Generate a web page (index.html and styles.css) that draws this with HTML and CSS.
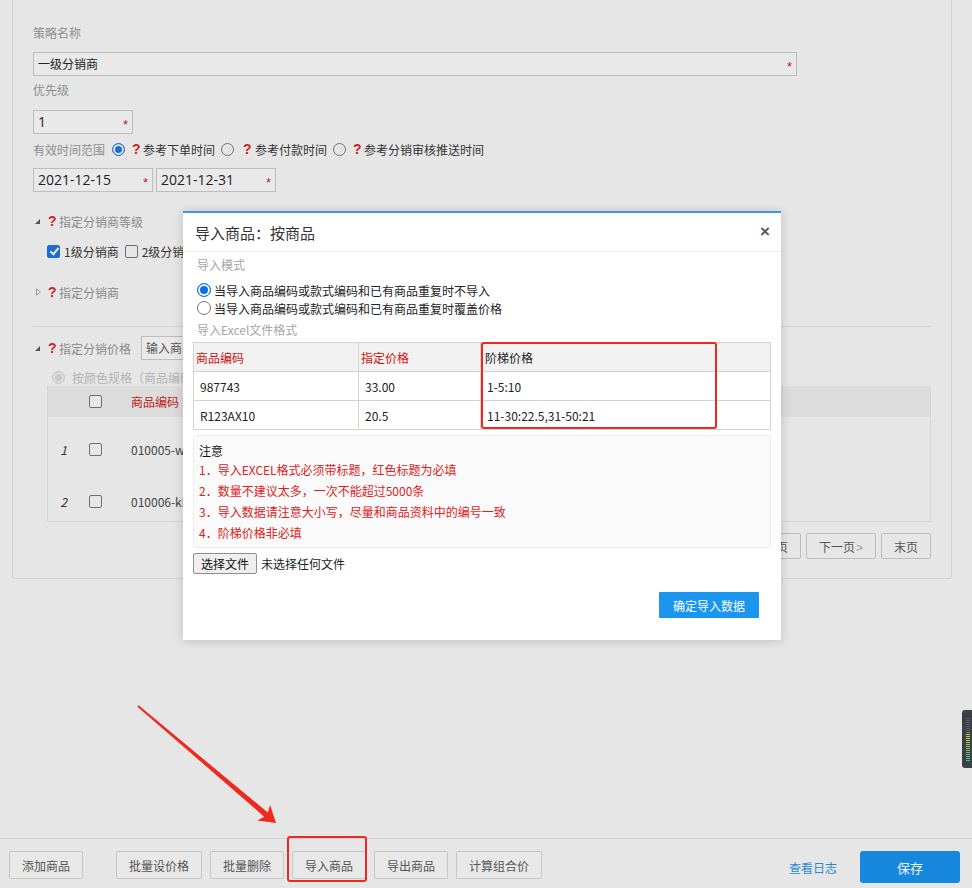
FILE: index.html
```html
<!DOCTYPE html>
<html lang="zh-CN">
<head>
<meta charset="utf-8">
<title>分销价格策略 - 导入商品</title>
<link rel="stylesheet" href="styles.css">
</head>
<body>
<main class="page">
  <section class="panel">
    <div class="field-label first">策略名称</div>
    <div class="input input-name"><span class="input-val">一级分销商</span><span class="req">*</span></div>
    <div class="field-label">优先级</div>
    <div class="input input-priority"><span class="input-val num">1</span><span class="req">*</span></div>
    <div class="time-row">
      <span class="inline-label">有效时间范围</span>
      <span class="radio checked"></span><span class="qmark">?</span><span class="opt">参考下单时间</span>
      <span class="radio"></span><span class="qmark wide">?</span><span class="opt">参考付款时间</span>
      <span class="radio"></span><span class="qmark">?</span><span class="opt">参考分销审核推送时间</span>
    </div>
    <div class="date-row">
      <div class="input input-date"><span class="input-val num">2021-12-15</span><span class="req">*</span></div>
      <div class="input input-date"><span class="input-val num">2021-12-31</span><span class="req">*</span></div>
    </div>
    <div class="sec">
      <span class="tri-open"></span><span class="qmark">?</span><span class="sec-title">指定分销商等级</span>
    </div>
    <div class="check-row">
      <span class="cbox checked"></span><span class="cb-text">1级分销商</span>
      <span class="cbox"></span><span class="cb-text">2级分销商</span>
      <span class="cbox"></span><span class="cb-text">3级分销商</span>
    </div>
    <div class="sec sec-closed">
      <svg class="tri-closed" width="5" height="8" viewBox="0 0 5 8"><path d="M0.5 0.8 L4.4 4 L0.5 7.2 Z" fill="none" stroke="#9a9a9a" stroke-width="1"/></svg><span class="qmark">?</span><span class="sec-title">指定分销商</span>
    </div>
    <div class="divider"></div>
    <div class="sec sec-price">
      <span class="tri-open"></span><span class="qmark">?</span><span class="sec-title">指定分销价格</span>
      <div class="input input-search"><span class="input-val muted">输入商品编码</span></div>
    </div>
    <div class="mode-row"><span class="radio disabled"></span><span class="mode-text">按颜色规格（商品编码）</span></div>
    <div class="grid">
      <div class="grid-head">
        <span class="c-idx"></span><span class="c-chk"><span class="cbox"></span></span><span class="c-code head-red">商品编码</span>
      </div>
      <div class="grid-row">
        <span class="c-idx">1</span><span class="c-chk"><span class="cbox"></span></span><span class="c-code">010005-white</span>
      </div>
      <div class="grid-row">
        <span class="c-idx">2</span><span class="c-chk"><span class="cbox"></span></span><span class="c-code">010006-khaki</span>
      </div>
    </div>
    <div class="pager">
      <button class="pbtn">首页</button>
      <button class="pbtn">&lt;上一页</button>
      <button class="pbtn">下一页<span class="gt">&gt;</span></button>
      <button class="pbtn">末页</button>
    </div>
  </section>
</main>

<footer class="footbar">
  <div class="foot-left">
    <button class="fbtn first">添加商品</button>
    <button class="fbtn">批量设价格</button>
    <button class="fbtn">批量删除</button>
    <button class="fbtn">导入商品</button>
    <button class="fbtn">导出商品</button>
    <button class="fbtn">计算组合价</button>
  </div>
  <div class="foot-right">
    <a class="log-link">查看日志</a>
    <button class="save">保存</button>
  </div>
</footer>

<div class="dialog">
  <div class="dlg-head">
    <span class="dlg-title">导入商品：按商品</span>
    <span class="dlg-close">×</span>
  </div>
  <div class="dlg-body">
    <div class="dlg-sub first">导入模式</div>
    <div class="dlg-radio first"><span class="radio checked bright"></span><span>当导入商品编码或款式编码和已有商品重复时不导入</span></div>
    <div class="dlg-radio"><span class="radio bright"></span><span>当导入商品编码或款式编码和已有商品重复时覆盖价格</span></div>
    <div class="dlg-sub second">导入Excel文件格式</div>
    <div class="xtable">
      <div class="xrow head">
        <div class="xcell x1 red">商品编码</div>
        <div class="xcell x2 red">指定价格</div>
        <div class="xcell x3">阶梯价格</div>
      </div>
      <div class="xrow">
        <div class="xcell x1">987743</div>
        <div class="xcell x2">33.00</div>
        <div class="xcell x3">1-5:10</div>
      </div>
      <div class="xrow">
        <div class="xcell x1">R123AX10</div>
        <div class="xcell x2">20.5</div>
        <div class="xcell x3">11-30:22.5,31-50:21</div>
      </div>
    </div>
    <div class="notes">
      <div class="notes-title">注意</div>
      <div class="notes-line">1．导入EXCEL格式必须带标题，红色标题为必填</div>
      <div class="notes-line">2．数量不建议太多，一次不能超过5000条</div>
      <div class="notes-line">3．导入数据请注意大小写，尽量和商品资料中的编号一致</div>
      <div class="notes-line">4．阶梯价格非必填</div>
    </div>
    <div class="file-row">
      <button class="file-btn">选择文件</button><span class="file-text">未选择任何文件</span>
    </div>
    <div class="dlg-foot">
      <button class="confirm">确定导入数据</button>
    </div>
  </div>
</div>

<div class="mark mark-ladder"></div>
<div class="mark mark-import"></div>

<svg class="arrow" width="300" height="840" viewBox="0 0 300 840">
  <polygon points="138.6,705.3 267.8,812.5 270.1,805.0 276,823 257.3,820.4 264.2,816.7 137.4,706.7" fill="#ee2a1f"/>
</svg>

<div class="float-widget">
  <svg width="10" height="58" viewBox="0 0 10 58">
    <defs>
      <linearGradient id="meter" x1="0" y1="0" x2="0" y2="1">
        <stop offset="0" stop-color="#5a5f64"/>
        <stop offset="0.34" stop-color="#5a5f64"/>
        <stop offset="0.36" stop-color="#d8d448"/>
        <stop offset="0.62" stop-color="#9ccc52"/>
        <stop offset="1" stop-color="#3fbfa6"/>
      </linearGradient>
      <pattern id="stripes" width="10" height="2" patternUnits="userSpaceOnUse">
        <rect width="10" height="1" fill="#fff"/>
      </pattern>
      <mask id="stripe-mask"><rect x="0" y="0" width="10" height="58" fill="url(#stripes)"/></mask>
    </defs>
    <rect x="0" y="0" width="14" height="58" rx="3" fill="#3b4046"/>
    <rect x="4" y="7" width="4" height="45" fill="url(#meter)" mask="url(#stripe-mask)"/>
  </svg>
</div>
</body>
</html>
```

FILE: styles.css
```css
* { box-sizing: border-box; }

html, body { margin: 0; }

body {
  font-family: "Noto Sans CJK SC", "Microsoft YaHei", sans-serif;
  font-size: 12px;
  color: #333;
  background: #e6e6e6;
  height: 888px;
  overflow: hidden;
  display: flex;
  flex-direction: column;
  position: relative;
}

button { font: inherit; cursor: default; }

/* ---------- page panel ---------- */
.page {
  flex: 1;
  padding-left: 12px;
}

.panel {
  width: 940px;
  border: 1px solid #d3d3d3;
  border-top: 0;
  border-radius: 0 0 3px 3px;
  padding: 0 20px 19px;
}

.field-label {
  line-height: 20px;
  color: #8e8e8e;
  margin-top: 4px;
}
.field-label.first { margin-top: 0; padding-top: 23px; }

.input {
  display: flex;
  align-items: center;
  justify-content: space-between;
  height: 24px;
  border: 1px solid #bdbdbd;
  background: #e9e9e9;
  padding: 0 4px 0 4px;
}
.input-val { color: #222; line-height: 20px; }
.input-val.num { font-family: "Open Sans", "Noto Sans", sans-serif; font-size: 14px; }
.input-val.muted { color: #555; }
.req {
  color: #c4133b;
  font-family: "Liberation Sans", sans-serif;
  font-size: 13px;
  line-height: 1;
  padding-top: 4px;
}

.input-name { margin-top: 9px; width: 764px; }
.input-priority { margin-top: 10px; width: 100px; }

.time-row {
  display: flex;
  align-items: center;
  height: 20px;
  margin-top: 5px;
}
.inline-label { color: #8e8e8e; margin-right: 7px; }
.opt { color: #333; margin-right: 6px; }

.radio {
  display: inline-block;
  width: 13px;
  height: 13px;
  border-radius: 50%;
  border: 1px solid #6f6f6f;
  background: #e6e6e6;
  margin-right: 7px;
  flex: none;
}
.radio.checked {
  border-color: #1b6dd2;
  background: #1b6dd2;
  box-shadow: inset 0 0 0 2px #e6e6e6;
}
.radio.bright { background: #fff; border-color: #767676; }
.radio.checked.bright {
  border-color: #0f6fe0;
  background: #0f6fe0;
  box-shadow: inset 0 0 0 2px #fff;
}
.radio.disabled {
  border-color: #c6c6c6;
  background: #c9c9c9;
  box-shadow: inset 0 0 0 2px #dedede;
}

.qmark {
  display: inline-block;
  width: 7px;
  color: #d11d1d;
  font-family: "Liberation Sans", sans-serif;
  font-weight: bold;
  font-size: 14px;
  line-height: 16px;
  margin-right: 4px;
}
.qmark.wide { margin-left: 2px; margin-right: 5px; }

.date-row {
  display: flex;
  gap: 3px;
  margin-top: 9px;
}
.input-date { width: 120px; }

.sec {
  display: flex;
  align-items: center;
  height: 20px;
  margin-top: 19px;
}
.sec-title { color: #8a8a8a; }
.tri-open {
  display: inline-block;
  width: 0;
  height: 0;
  border-style: solid;
  border-width: 0 0 5px 5px;
  border-color: transparent transparent #555 transparent;
  margin: 0 8px 0 2px;
}
.tri-closed { display: block; margin: 0 7px 0 3px; }
.sec-closed { margin-top: 21px; }

.check-row {
  display: flex;
  align-items: center;
  height: 20px;
  margin-top: 10px;
  padding-left: 14px;
}
.cbox {
  display: inline-block;
  position: relative;
  width: 13px;
  height: 13px;
  border: 1px solid #6f6f6f;
  border-radius: 2px;
  background: #e6e6e6;
  flex: none;
}
.cbox.checked { background: #1b6dd2; border-color: #1b6dd2; }
.cbox.checked::after {
  content: "";
  position: absolute;
  left: 3.5px;
  top: 0.5px;
  width: 3px;
  height: 7px;
  border: solid #e6e6e6;
  border-width: 0 2px 2px 0;
  transform: rotate(40deg);
}
.cb-text { margin: 0 6px 0 4px; color: #333; }

.divider {
  margin-top: 24px;
  border-top: 1px solid #d4d4d4;
}

.sec-price { margin-top: 9px; height: 24px; }
.input-search { margin-left: 10px; width: 220px; }

.mode-row {
  display: flex;
  align-items: center;
  height: 18px;
  margin-top: 8px;
  padding-left: 19px;
}
.mode-text { color: #b3b3b3; }

.grid {
  margin-left: 14px;
  border: 1px solid #d6d6d6;
  border-top: 0;
}
.grid-head {
  display: flex;
  align-items: center;
  height: 31px;
  background: #dcdcdc;
}
.grid-row {
  display: flex;
  align-items: center;
  height: 52px;
  padding-top: 12px;
}
.c-idx { width: 31px; text-align: center; font-style: italic; color: #333; }
.c-chk { width: 32px; display: flex; justify-content: center; }
.c-code { padding-left: 20px; color: #444; }
.head-red { color: #c21a1a; }

.pager {
  display: flex;
  justify-content: flex-end;
  gap: 5px;
  margin-top: 11px;
}
.pbtn {
  height: 26px;
  padding: 0 12px;
  border: 1px solid #bdbdbd;
  border-radius: 2px;
  background: #e6e6e6;
  color: #555;
  font-size: 12px;
}
.pbtn .gt { color: #999; font-family: "Liberation Sans", sans-serif; margin-left: 1px; }

/* ---------- footer ---------- */
.footbar {
  height: 50px;
  flex: none;
  border-top: 1px solid #d2d2d2;
  display: flex;
  justify-content: space-between;
  align-items: flex-start;
  padding: 12px 12px 0 9px;
}
.foot-left { display: flex; }
.fbtn {
  height: 28px;
  padding: 0 12px;
  border: 1px solid #c6c6c6;
  border-radius: 2px;
  background: #e8e8e8;
  color: #555;
  margin-left: 8px;
}
.fbtn.first { margin-left: 0; margin-right: 25px; }
.foot-right { display: flex; align-items: center; height: 32px; }
.log-link { color: #2a89d0; margin-right: 23px; }
.save {
  width: 100px;
  height: 32px;
  border: 0;
  border-radius: 3px;
  background: #1787de;
  color: #eef4fa;
  font-size: 13px;
}

/* ---------- dialog ---------- */
.dialog {
  position: absolute;
  left: 183px;
  top: 211px;
  width: 598px;
  height: 429px;
  background: #fff;
  border-top: 2px solid #3f98dc;
  box-shadow: 0 1px 10px rgba(0, 0, 0, 0.18);
}
.dlg-head {
  height: 39px;
  display: flex;
  align-items: center;
  justify-content: space-between;
  padding: 0 11px 0 12px;
  border-bottom: 1px solid #ebebeb;
}
.dlg-title { font-size: 15px; color: #333; }
.dlg-close {
  font-family: "Liberation Sans", sans-serif;
  font-weight: bold;
  font-size: 17px;
  color: #555;
}
.dlg-body { padding: 0 10px; }
.dlg-sub { color: #a6a6a6; line-height: 18px; padding-left: 4px; }
.dlg-sub.first { margin-top: 4px; }
.dlg-sub.second { margin-top: 4px; }
.dlg-radio {
  display: flex;
  align-items: center;
  height: 18px;
  padding-left: 4px;
  color: #222;
}
.dlg-radio.first { margin-top: 7px; }
.dlg-radio .radio { width: 14px; height: 14px; margin-right: 3px; }

.xtable {
  margin-top: 3px;
  border-top: 1px solid #d3d3d3;
  border-left: 1px solid #d3d3d3;
}
.xrow { display: flex; height: 29px; }
.xrow.head { background: #f2f2f2; }
.xcell {
  display: flex;
  align-items: center;
  padding-left: 6px;
  border-right: 1px solid #d3d3d3;
  border-bottom: 1px solid #d3d3d3;
  color: #222;
}
.xrow.head .xcell { padding-left: 2px; }
.xrow.head .x3 { padding-left: 4px; }
.xcell.red { color: #cc1111; }
.x1 { width: 165px; }
.x2 { width: 122px; }
.x3 { flex: 1; }

.notes {
  margin-top: 5px;
  border: 1px solid #ececec;
  border-radius: 3px;
  background: #fafafa;
  padding: 6px 5px 4px;
}
.notes-title { line-height: 17px; color: #111; }
.notes-line { line-height: 21px; color: #e0201c; }

.file-row {
  display: flex;
  align-items: center;
  margin-top: 5px;
}
.file-btn {
  height: 21px;
  padding: 0 7px;
  border: 1px solid #8f8f8f;
  border-radius: 2px;
  background: #efefef;
  color: #111;
  font-size: 12px;
}
.file-text { margin-left: 4px; color: #222; }

.dlg-foot {
  display: flex;
  justify-content: flex-end;
  margin-top: 18px;
  padding-right: 12px;
}
.confirm {
  width: 100px;
  height: 26px;
  border: 0;
  border-radius: 1px;
  background: #1a96ee;
  color: #fff;
  font-size: 12px;
}

/* ---------- annotations ---------- */
.mark {
  position: absolute;
  border: 2px solid #ea2a20;
  border-radius: 3px;
}
.mark-ladder { left: 481px; top: 342px; width: 236px; height: 87px; }
.mark-import { left: 287px; top: 836px; width: 80px; height: 46px; }

.arrow {
  position: absolute;
  left: 0;
  top: 0;
  pointer-events: none;
}

.float-widget {
  position: absolute;
  left: 962px;
  top: 710px;
  width: 10px;
  height: 58px;
}
.float-widget svg { display: block; }
```
